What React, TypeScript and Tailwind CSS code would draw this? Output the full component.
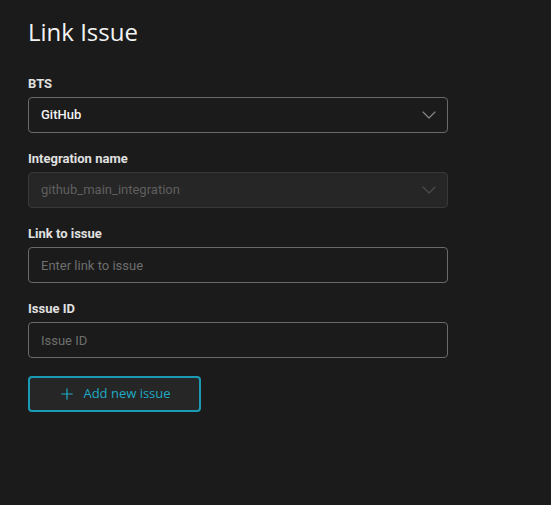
import { Plus, ChevronDown } from 'lucide-react'

const fields = [
  { label: 'Integration name', placeholder: 'github_main_integration', disabled: true, select: true },
  { label: 'Link to issue', placeholder: 'Enter link to issue' },
  { label: 'Issue ID', placeholder: 'Issue ID' },
]

export default function App() {
  return (
    <div className="min-h-[505px] w-full bg-[#1b1b1b] px-7 pt-[16px] font-['Roboto',sans-serif]">
      <h1 className="font-['Open_Sans',sans-serif] text-[24px] leading-[32px] text-[#f4f4f4]">Link Issue</h1>

      <div className="mt-[27px] flex w-[420px] flex-col">
        <label className="text-[13px] font-bold leading-[18px] text-[#e0e0e0]">BTS</label>
        <div className="mt-[4px] flex h-[36px] items-center justify-between rounded-[4px] border border-[#6a6a6a] pl-[12px] pr-[6px]">
          <span className="text-[13px] font-medium text-[#f2f2f2]">GitHub</span>
          <ChevronDown className="h-[24px] w-[24px] text-[#8a8a8a]" strokeWidth={1.1} />
        </div>

        {fields.map((f) => (
          <div key={f.label} className="mt-[17px] flex flex-col">
            <label className="text-[13px] font-bold leading-[18px] text-[#e0e0e0]">{f.label}</label>
            {f.select ? (
              <div className="mt-[4px] flex h-[36px] items-center justify-between rounded-[4px] border border-[#383838] bg-[#262626] pl-[12px] pr-[6px]">
                <span className="text-[13px] text-[#5f5f5f]">{f.placeholder}</span>
                <ChevronDown className="h-[24px] w-[24px] text-[#4c4c4c]" strokeWidth={1.1} />
              </div>
            ) : (
              <input
                placeholder={f.placeholder}
                className="mt-[4px] h-[36px] rounded-[4px] border border-[#6a6a6a] bg-transparent pl-[12px] text-[13px] text-[#f2f2f2] outline-none placeholder:text-[#6e6e6e]"
              />
            )}
          </div>
        ))}

        <button className="mt-[18px] flex h-[36px] w-[173px] items-center justify-center gap-[7px] rounded-[4px] border-2 border-[#1b9bb3] bg-[#262626] font-['Open_Sans',sans-serif] text-[13px] text-[#1eaac4]">
          <Plus className="h-[18px] w-[18px]" strokeWidth={1.6} />
          Add new issue
        </button>
      </div>
    </div>
  )
}
